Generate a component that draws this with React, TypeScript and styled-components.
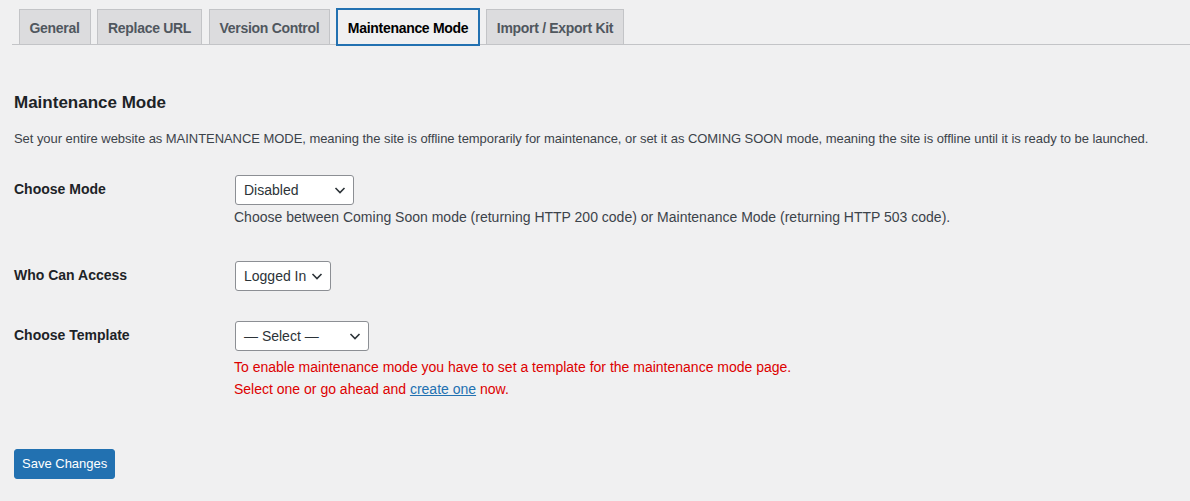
import React from "react";
import styled, { createGlobalStyle, css } from "styled-components";

const GlobalStyle = createGlobalStyle`
  html, body {
    margin: 0;
    padding: 0;
    background: #f0f0f1;
  }
  body {
    font-family: "Liberation Sans", Arial, sans-serif;
    color: #3c434a;
    font-size: 13px;
    line-height: 1.4em;
  }
  * { box-sizing: border-box; }
`;

const Page = styled.div`
  padding: 10px 0 0 12px;
  min-height: 501px;
`;

const TabBar = styled.nav`
  display: flex;
  align-items: flex-end;
  border-bottom: 1px solid #c3c4c7;
  height: 35px;
`;

const Tab = styled.a<{ $active?: boolean }>`
  display: block;
  margin-left: 6.5px;
  padding: 6px 10px 4px;
  height: 35px;
  border: 1px solid #c3c4c7;
  border-bottom: none;
  background: #dcdcde;
  color: #50575e;
  font-size: 14px;
  font-weight: 600;
  line-height: 24px;
  letter-spacing: -0.3px;
  text-decoration: none;
  white-space: nowrap;
  cursor: pointer;
  ${(p) =>
    p.$active &&
    css`
      background: #f0f0f1;
      color: #000;
      height: 36px;
      margin-bottom: -1px;
      border: 1px solid #2271b1;
      box-shadow: 0 0 0 1px #2271b1;
      position: relative;
    `}
`;

const Content = styled.div`
  padding-left: 2px;
  padding-right: 20px;
`;

const Heading = styled.h2`
  margin: 47px 0 0;
  font-size: 17px;
  font-weight: 600;
  line-height: 1.3;
  color: #1d2327;
`;

const Intro = styled.p`
  margin: 15px 0 0;
  font-size: 13px;
  line-height: 1.5;
  color: #3c434a;
  letter-spacing: -0.05px;
`;

const FormTable = styled.div`
  margin-top: 11px;
  display: grid;
  grid-template-columns: 211px 1fr;
`;

const Label = styled.div`
  padding: 20px 10px 20px 0;
  font-size: 14px;
  font-weight: 600;
  line-height: 1.3;
  color: #1d2327;
`;

const Field = styled.div`
  padding: 15px 10px;
  font-size: 14px;
  line-height: 1.3;
`;

const Select = styled.div<{ $width: number }>`
  display: flex;
  align-items: center;
  justify-content: space-between;
  width: ${(p) => p.$width}px;
  height: 30px;
  padding: 0 7px 0 8px;
  background: #fff;
  border: 1px solid #8c8f94;
  border-radius: 3px;
  color: #2c3338;
  font-size: 14px;
  line-height: 28px;
  white-space: nowrap;
`;

const Chevron = styled.svg`
  flex: none;
  width: 12px;
  height: 12px;
`;

const Description = styled.p`
  margin: 2px 0 3px;
  margin-left: -1px;
  font-size: 14px;
  line-height: 21px;
  color: #3c434a;
`;

const Warning = styled.p`
  margin: 5px 0 0 -1px;
  font-size: 14px;
  line-height: 22px;
  color: #dd0000;
`;

const Link = styled.a`
  color: #2271b1;
  text-decoration: underline;
`;

const Submit = styled.p`
  margin: 0;
  padding: 34px 0 0;
`;

const Button = styled.button`
  height: 30px;
  padding: 0 7px;
  background: #2271b1;
  border: 1px solid #2271b1;
  border-radius: 3px;
  color: #fff;
  font-family: inherit;
  font-size: 13px;
  line-height: 28px;
  cursor: pointer;
`;

const ChevronIcon = () => (
  <Chevron viewBox="0 0 12 12" aria-hidden>
    <path d="M1.5 4 L6 8.5 L10.5 4" fill="none" stroke="#2c3338" strokeWidth="1.6" />
  </Chevron>
);

const FakeSelect = ({ value, width }: { value: string; width: number }) => (
  <Select $width={width}>
    <span>{value}</span>
    <ChevronIcon />
  </Select>
);

const tabs = ["General", "Replace URL", "Version Control", "Maintenance Mode", "Import / Export Kit"];

export default function App() {
  return (
    <>
      <GlobalStyle />
      <Page>
        <TabBar>
          {tabs.map((t) => (
            <Tab key={t} $active={t === "Maintenance Mode"}>
              {t}
            </Tab>
          ))}
        </TabBar>
        <Content>
          <Heading>Maintenance Mode</Heading>
          <Intro>
            Set your entire website as MAINTENANCE MODE, meaning the site is offline temporarily for maintenance, or
            set it as COMING SOON mode, meaning the site is offline until it is ready to be launched.
          </Intro>
          <FormTable>
            <Label>Choose Mode</Label>
            <Field>
              <FakeSelect value="Disabled" width={119} />
              <Description>
                Choose between Coming Soon mode (returning HTTP 200 code) or Maintenance Mode (returning HTTP 503 code).
              </Description>
            </Field>
            <Label>Who Can Access</Label>
            <Field>
              <FakeSelect value="Logged In" width={96} />
            </Field>
            <Label>Choose Template</Label>
            <Field>
              <FakeSelect value="— Select —" width={134} />
              <Warning>
                To enable maintenance mode you have to set a template for the maintenance mode page.
                <br />
                Select one or go ahead and <Link href="#">create one</Link> now.
              </Warning>
            </Field>
          </FormTable>
          <Submit>
            <Button>Save Changes</Button>
          </Submit>
        </Content>
      </Page>
    </>
  );
}
